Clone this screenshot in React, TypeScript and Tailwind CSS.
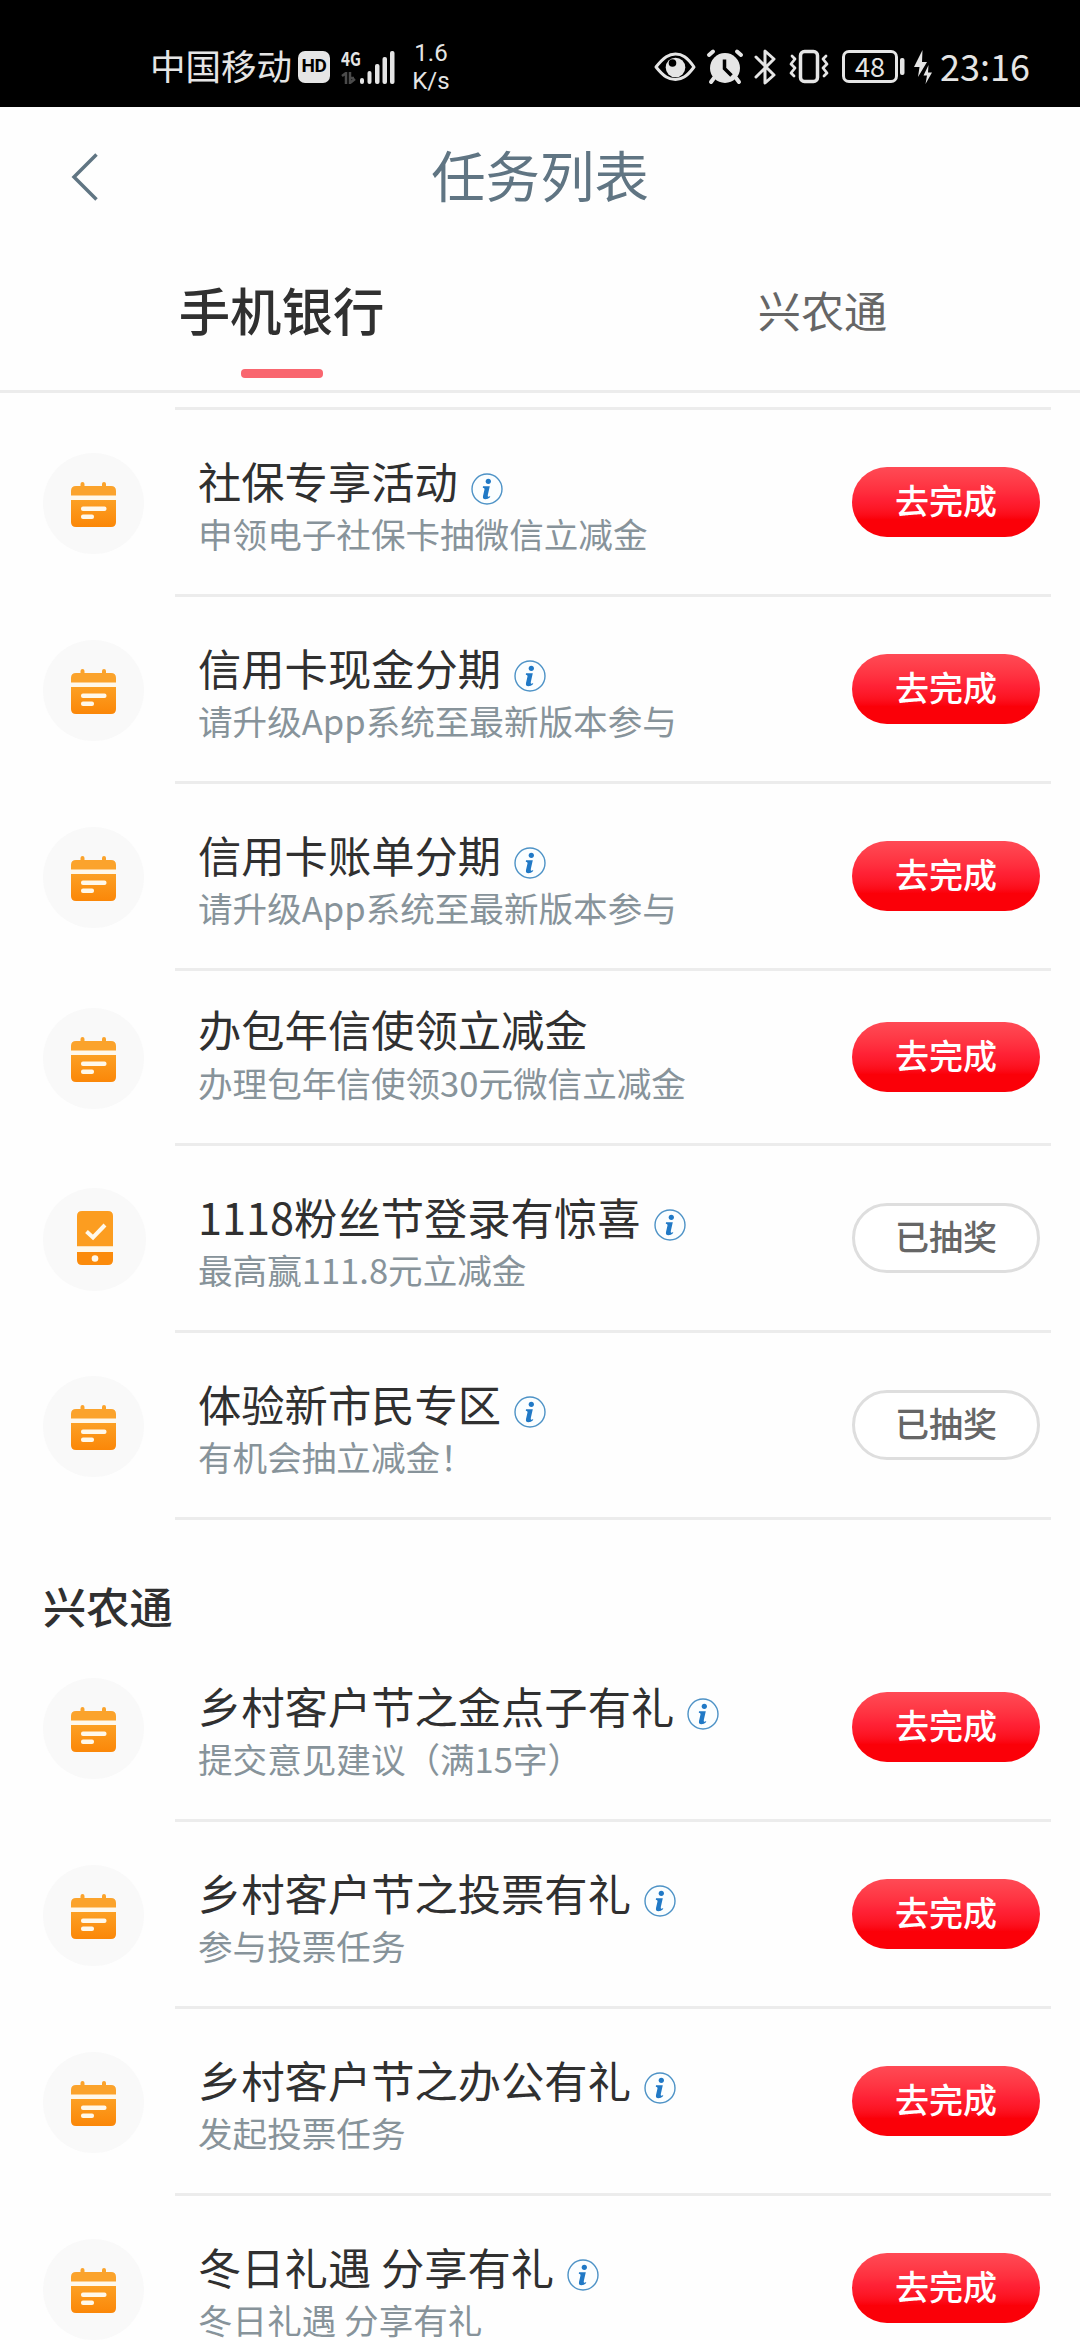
type Task = {
  title: string;
  desc: string;
  info?: boolean;
  done?: boolean;
  phone?: boolean;
};

const BANK_TASKS: Task[] = [
  { title: "社保专享活动", desc: "申领电子社保卡抽微信立减金", info: true },
  { title: "信用卡现金分期", desc: "请升级App系统至最新版本参与", info: true },
  { title: "信用卡账单分期", desc: "请升级App系统至最新版本参与", info: true },
  { title: "办包年信使领立减金", desc: "办理包年信使领30元微信立减金" },
  { title: "1118粉丝节登录有惊喜", desc: "最高赢111.8元立减金", info: true, done: true, phone: true },
  { title: "体验新市民专区", desc: "有机会抽立减金！", info: true, done: true },
];

const RURAL_TASKS: Task[] = [
  { title: "乡村客户节之金点子有礼", desc: "提交意见建议（满15字）", info: true },
  { title: "乡村客户节之投票有礼", desc: "参与投票任务", info: true },
  { title: "乡村客户节之办公有礼", desc: "发起投票任务", info: true },
  { title: "冬日礼遇 分享有礼", desc: "冬日礼遇 分享有礼", info: true },
];

function CalendarIcon() {
  return (
    <svg width="101" height="101" viewBox="0 0 101 101" className="block">
      <defs>
        <linearGradient id="cal" x1="0" y1="0" x2="0" y2="1">
          <stop offset="0" stopColor="#fca024" />
          <stop offset="1" stopColor="#fb8708" />
        </linearGradient>
      </defs>
      <circle cx="50.5" cy="50.5" r="50.5" fill="#f9f9f9" />
      <path
        d="M28 43v-5q0-5 5-5h4.500v-2a2 2 0 0 1 4 0V33h17.500v-2a2 2 0 0 1 4 0V33h5q5 0 5 5v5z"
        fill="#fba32c"
      />
      <path d="M28 47h45v22q0 5-5 5h-35q-5 0-5-5z" fill="url(#cal)" />
      <rect x="28" y="42.500" width="45" height="4.500" fill="#fff8ea" />
      <rect x="38" y="53.500" width="25.500" height="4.500" rx="2" fill="#fff8ea" />
      <rect x="38" y="61.500" width="13" height="4.500" rx="2" fill="#fff8ea" />
    </svg>
  );
}

function PhoneIcon() {
  return (
    <svg width="103" height="103" viewBox="0 0 103 103" className="block">
      <circle cx="51.500" cy="51.500" r="51.500" fill="#f9f9f9" />
      <path d="M34 58.500V28q0-5 5-5h26q5 0 5 5v30.500z" fill="#fc9d20" />
      <path d="M34 64h36v8q0 5-5 5H39q-5 0-5-5z" fill="#fb8b0c" />
      <rect x="34" y="58.500" width="36" height="5.500" fill="#fff8ea" />
      <path d="M43.500 43.500l6.500 6 12-12.500" fill="none" stroke="#fff8ea" strokeWidth="4" />
      <circle cx="52" cy="70.500" r="3.300" fill="#fff8ea" />
    </svg>
  );
}

function InfoIcon() {
  return (
    <svg width="32" height="32" viewBox="0 0 32 32" className="mt-[17px] ml-[13px] block shrink-0">
      <circle cx="16" cy="16" r="15" fill="#fbfeff" stroke="#4d92c6" strokeWidth="1.400" />
      <circle cx="17.300" cy="8.300" r="2.600" fill="#2079c6" />
      <path
        d="M12 13.300h6.800l-2 8.800q-.4 2 .9 1.700l1.500-.7-.2 1.200q-2 2-4.600 2-3 0-2.400-3.200l1.500-6.600q.3-1.500-1.700-1.700z"
        fill="#2079c6"
      />
    </svg>
  );
}

function TaskRow({ task }: { task: Task }) {
  return (
    <div className={`flex ${task.info ? "h-[187px]" : "h-[175px]"}`}>
      <div className="flex w-[175px] shrink-0 items-center pb-px pl-[43px]">
        {task.phone ? <PhoneIcon /> : <CalendarIcon />}
      </div>
      <div className="mr-[29px] flex flex-1 items-center justify-between border-b-[3px] border-[#ececec] pr-[11px] pl-[23px]">
        <div className={task.info ? "pt-[8px]" : "pb-[4px]"}>
          <div className="flex h-[54px] items-center">
            <span className="text-[43.300px] leading-[54px] whitespace-nowrap text-[#303030]">{task.title}</span>
            {task.info && <InfoIcon />}
          </div>
          <div
            className={`text-[34.600px] whitespace-nowrap text-[#87939a] ${task.info ? "leading-[52px]" : "leading-[54px]"}`}
          >
            {task.desc}
          </div>
        </div>
        {task.done ? (
          <button className="mb-px h-[70px] w-[188px] rounded-full border-[3px] border-[#dedede] bg-white text-[34px] leading-[60px] font-medium text-[#666]">
            <span className="block h-[64px]">已抽奖</span>
          </button>
        ) : (
          <button className="mb-px h-[70px] w-[188px] rounded-full bg-linear-to-b from-[#ff4a55] via-[#ff2236] via-45% to-[#fb0008] to-75% text-[34px] leading-[66px] font-medium text-white">
            <span className="block h-[70px]">去完成</span>
          </button>
        )}
      </div>
    </div>
  );
}

function StatusBar() {
  return (
    <div className="flex h-[107px] items-center justify-between bg-black pt-[26px] pr-[50px] pl-[150px] text-[#e5e5e5]">
      <div className="flex h-[81px] items-center">
        <span className="mb-[3px] w-[142px] text-[35.5px] leading-[66px] whitespace-nowrap">中国移动</span>
        <span className="ml-[6px] flex h-[32px] w-[32px] items-center justify-center rounded-[7px] bg-[#e5e5e5] font-[Roboto] text-[19px] font-bold tracking-[-0.500px] text-black">
          HD
        </span>
        <div className="ml-[11px] flex h-[34px] w-[56px] items-end">
          <div className="flex h-[34px] w-[19px] flex-col justify-between">
            <span className="-mt-px origin-left scale-x-[0.800] text-[19px] leading-[18px] font-bold">4G</span>
            <svg width="16" height="12" viewBox="0 0 16 12" fill="none" stroke="#4a4a4a" strokeWidth="2.500">
              <path d="M1 4l4-3v11M9 0v11l5-4M9 6h4" />
            </svg>
          </div>
          <svg width="36" height="34" viewBox="0 0 36 34" fill="#e5e5e5">
            <rect x="0" y="28" width="4" height="6" rx="2" />
            <rect x="7.500" y="21" width="4" height="13" rx="2" />
            <rect x="15" y="14" width="4.500" height="20" rx="2" />
            <rect x="22.500" y="7" width="4.500" height="27" rx="2" />
            <rect x="30" y="1" width="4.500" height="33" rx="2" />
          </svg>
        </div>
        <div className="ml-[14px] flex w-[40px] flex-col items-center font-[Roboto] text-[24px] leading-[28px]">
          <span>1.6</span>
          <span>K/s</span>
        </div>
      </div>
      <div className="flex h-[81px] items-center">
        <svg width="260" height="40" viewBox="0 0 260 40" className="block">
          <g fill="none" stroke="#e5e5e5" strokeWidth="3" strokeLinejoin="round" strokeLinecap="round">
            <path d="M2 20C10 10 15 7 21.500 7S33 10 40 20C33 29.500 28 32.500 21.500 32.500S10 30 2 20z" />
            <path d="M102 10l18 18-9 8V4l9 8-18 18" />
            <rect x="146.500" y="4.500" width="17" height="30" rx="4" strokeWidth="3.500" />
            <path d="M138 9l3 3-4 5 4 4-4 5 3 3M172 9l-3 3 4 5-4 4 4 5-3 3" strokeWidth="2.800" />
            <rect x="189.500" y="4.500" width="53" height="30" rx="5.500" />
          </g>
          <circle cx="21.500" cy="20.500" r="9.800" fill="#e5e5e5" />
          <circle cx="18.500" cy="16" r="3.800" fill="#000" />
          <circle cx="71" cy="21" r="15" fill="#e5e5e5" />
          <path
            d="M55 8l4-3.500M87 8l-4-3.500M60 31l-3 4M82 31l3 4"
            stroke="#e5e5e5"
            strokeWidth="4"
            strokeLinecap="round"
          />
          <path d="M70.500 12.500v9l7 7" fill="none" stroke="#000" strokeWidth="3.500" />
          <text x="216" y="29.500" fontSize="27" textAnchor="middle" fill="#e5e5e5">
            48
          </text>
          <rect x="246" y="11" width="4.500" height="17" rx="2" fill="#e5e5e5" />
        </svg>
        <svg width="20" height="40" viewBox="0 0 20 40" className="block" fill="#e5e5e5">
          <path d="M8.500 3L0 20h5.500L4 30l9-15H8zM14.500 18L9.500 28.500h3.500L11.500 37l6.500-11.500h-4z" />
        </svg>
        <span className="mb-[4px] ml-[6px] w-[90px] text-[36px] leading-[66px] whitespace-nowrap">23:16</span>
      </div>
    </div>
  );
}

export default function App() {
  return (
    <div className="flex h-[2340px] w-[1080px] flex-col overflow-hidden bg-[#fefefe] font-['Noto_Sans_CJK_SC',sans-serif]">
      <StatusBar />
      <header className="grid h-[141px] shrink-0 grid-cols-[1fr_auto_1fr] items-center">
        <svg width="28" height="48" viewBox="0 0 28 48" className="mb-[2px] ml-[70px] block">
          <path d="M26.500 1.500L4 24l22.500 22.500" fill="none" stroke="#607583" strokeWidth="3.500" />
        </svg>
        <h1 className="mb-[7px] text-[54.400px] leading-[70px] text-[#607583]">任务列表</h1>
      </header>
      <nav className="flex h-[145px] shrink-0 border-b-[3px] border-[#ececec]">
        <div className="flex w-[563px] flex-col items-center">
          <span className="mt-[23px] text-[51.400px] leading-[76px] font-medium text-[#303030]">手机银行</span>
          <span className="mt-[22px] h-[9px] w-[82px] rounded-[4px] bg-[#f9666f]" />
        </div>
        <div className="flex flex-1 justify-center">
          <span className="mt-[23px] ml-[2px] text-[43.200px] leading-[76px] text-[#666]">兴农通</span>
        </div>
      </nav>
      <main className="shrink-0 pt-[14px]">
        <div className="mr-[29px] ml-[175px] h-[3px] bg-[#ececec]" />
        {BANK_TASKS.map((task) => (
          <TaskRow key={task.title} task={task} />
        ))}
        <h2 className="h-[115px] pt-[53px] pl-[43px] text-[43.200px] leading-[64px] font-medium text-[#303030]">兴农通</h2>
        {RURAL_TASKS.map((task) => (
          <TaskRow key={task.title} task={task} />
        ))}
      </main>
    </div>
  );
}
